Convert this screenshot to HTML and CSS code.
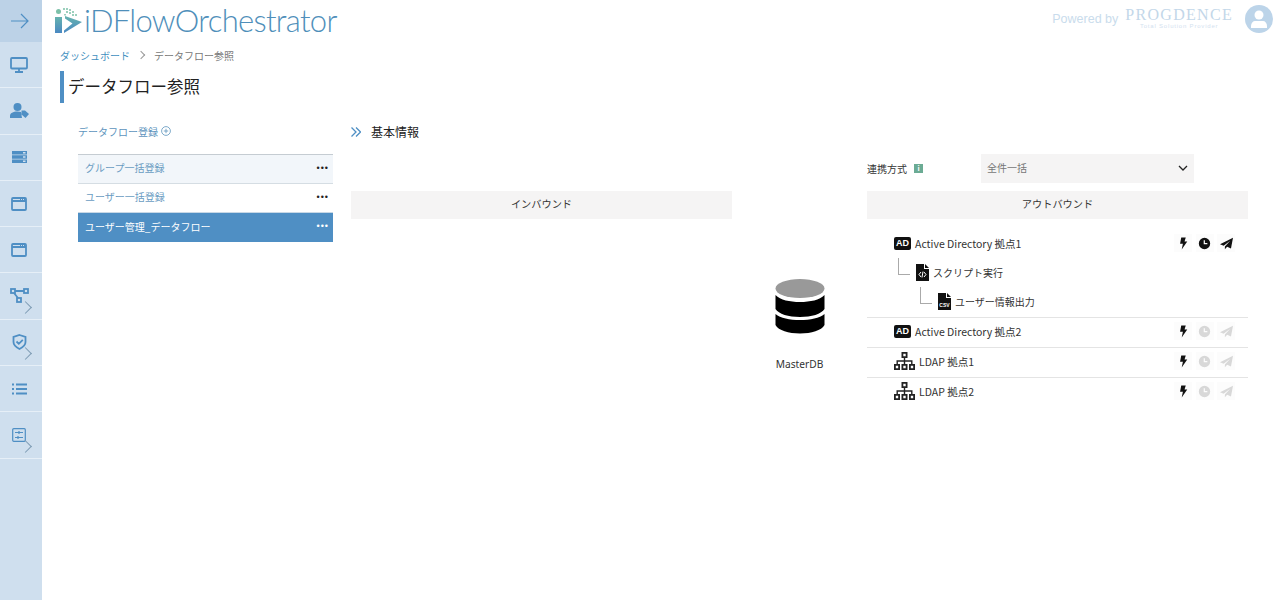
FILE: index.html
```html
<!DOCTYPE html>
<html lang="ja">
<head>
    <meta charset="UTF-8">
    <title>データフロー参照</title>
    <link rel="stylesheet" href="styles.css">
</head>
<body>
    <svg class="icon-defs" width="0" height="0">
        <symbol id="bolt" viewBox="0 0 12 16"><path d="M3 0h6L7.400 5.400H11L3.600 16l1.600-7.600H1.400z"/></symbol>
        <symbol id="clock" viewBox="0 0 16 16"><path fill-rule="evenodd" d="M8 1a7 7 0 1 1 0 14A7 7 0 0 1 8 1zM7 4v5h4.500V7.500H8.500V4z"/></symbol>
        <symbol id="send" viewBox="0 0 16 16"><path d="M16 1 13.500 14 8.800 12 6 15V11.800L12.500 4.500 4.500 10.800 0 9z"/></symbol>
        <symbol id="ldap" viewBox="0 0 21 18">
            <path d="M7.500 0h6v6h-6zM9.300 1.800v2.400h2.400V1.800zM0 12h6v6H0zM1.800 13.800v2.400h2.400v-2.400zM7.500 12h6v6h-6zM9.300 13.800v2.400h2.400v-2.400zM15 12h6v6h-6zM16.800 13.800v2.400h2.400v-2.400zM9.800 6h1.400v2.300h7.300V12h-1.400V9.700h-5.900V12H9.800V9.700H3.900V12H2.500V8.300h7.300z" fill-rule="evenodd"/>
        </symbol>
    </svg>

    <div class="layout">
        <nav class="sidebar">
            <div class="nav-item nav-toggle">
                <svg width="20" height="18" viewBox="0 0 20 18" class="line-icon"><path d="M1 9h17M11 2l7 7-7 7"/></svg>
            </div>
            <div class="nav-item">
                <svg width="18" height="16" viewBox="0 0 18 16" class="line-icon thick"><rect x="1" y="1" width="16" height="10.500" rx="1"/><path d="M9 12v2.500M5 15h8"/></svg>
            </div>
            <div class="nav-item">
                <svg width="19" height="15" viewBox="0 0 19 15" class="fill-icon"><circle cx="7.500" cy="4" r="4"/><path d="M0 15v-2c0-3 3-4.500 7.500-4.500 1.500 0 2.500.2 3.500.5l1 6zM11.500 7.500h3.500l4 3.500-3.500 4-4-3.500z"/></svg>
            </div>
            <div class="nav-item">
                <svg width="15" height="12" viewBox="0 0 15 12" class="fill-icon"><path fill-rule="evenodd" d="M0 0h15v3.500H0zM11 1v1.500h2.500V1zM0 4.250h15v3.500H0zM11 5.250v1.500h2.500v-1.500zM0 8.500h15V12H0zM11 9.500V11h2.500V9.500z"/></svg>
            </div>
            <div class="nav-item">
                <svg width="16" height="14" viewBox="0 0 16 14" class="line-icon thick"><rect x="1" y="1" width="14" height="12" rx="1"/><path d="M1 4h14M9 2.500h1M11 2.500h1M13 2.500h1"/></svg>
            </div>
            <div class="nav-item">
                <svg width="16" height="14" viewBox="0 0 16 14" class="line-icon thick"><rect x="1" y="1" width="14" height="12" rx="1"/><path d="M1 4h14M9 2.500h1M11 2.500h1M13 2.500h1"/></svg>
            </div>
            <div class="nav-item has-sub">
                <svg width="19" height="16" viewBox="0 0 19 16" class="line-icon thick"><rect x="1" y="1" width="4" height="4"/><rect x="14" y="1" width="4" height="4"/><rect x="7" y="10" width="4" height="4"/><path d="M5 3h9M4 5l4 5"/></svg>
                <span class="sub-arrow"></span>
            </div>
            <div class="nav-item has-sub">
                <svg width="15" height="16" viewBox="0 0 15 16" class="line-icon thick"><path d="M7.500 1l6 2v5c0 3-3 5.500-6 7-3-1.500-6-4-6-7V3zM4.500 7.500l2.300 2.300 4-4"/></svg>
                <span class="sub-arrow"></span>
            </div>
            <div class="nav-item">
                <svg width="15" height="12" viewBox="0 0 15 12" class="line-icon thick"><path d="M0 1.500h2M4 1.500h11M0 6h2M4 6h11M0 10.500h2M4 10.500h11"/></svg>
            </div>
            <div class="nav-item has-sub">
                <svg width="14" height="14" viewBox="0 0 14 14" class="line-icon"><rect x=".7" y=".7" width="12.600" height="12.600" rx="1"/><path d="M3 4.500h8M7 3v3M3 9.500h8M6 8v3"/></svg>
                <span class="sub-arrow"></span>
            </div>
        </nav>

        <div class="page">
            <header class="topbar">
                <div class="logo">
                    <svg class="logo-mark" width="28" height="26" viewBox="0 0 28 26">
                        <defs>
                            <linearGradient id="logo-grad" x1="0" y1="0" x2="0" y2="1">
                                <stop offset="0" stop-color="#66b3ae"/>
                                <stop offset="1" stop-color="#4a88c2"/>
                            </linearGradient>
                        </defs>
                        <rect x="0" y="9" width="7" height="16" fill="url(#logo-grad)"/>
                        <circle cx="3.500" cy="3.500" r="2.500" fill="#7cc0a8"/>
                        <path d="M10 8 27 14 9 25V22.500L17.500 15.500 10 10.500z" fill="url(#logo-grad)"/>
                        <path d="M8 0h2v2H8zM11 0h2v2h-2zM14 1h2v2h-2zM11 3h2v2h-2zM14 4h2v2h-2zM17 3h2v2h-2zM17 6h2v2h-2zM20 6h2v2h-2zM9 6h2v1.500H9z" fill="#9cd0bd"/>
                    </svg>
                    <span class="logo-text">iDFlowOrchestrator</span>
                </div>
                <div class="powered">
                    <span class="powered-by">Powered by</span>
                    <div class="vendor">
                        <span class="vendor-name">PROGDENCE</span>
                        <span class="vendor-sub">Total Solution Provider</span>
                    </div>
                    <div class="avatar">
                        <svg width="16" height="18" viewBox="0 0 16 18" fill="#fff"><circle cx="8" cy="5" r="4.500"/><path d="M0 18v-2c0-3 2-5 4-5h8c2 0 4 2 4 5v2z"/></svg>
                    </div>
                </div>
            </header>

            <div class="breadcrumb">
                <a class="crumb-link">ダッシュボード</a>
                <span class="crumb-sep"></span>
                <span>データフロー参照</span>
            </div>

            <h1 class="page-title">データフロー参照</h1>

            <div class="columns">
                <aside class="flow-panel">
                    <div class="flow-add">
                        データフロー登録
                        <svg width="10" height="10" viewBox="0 0 10 10" class="plus"><circle cx="5" cy="5" r="4.400"/><path d="M2.800 5h4.400M5 2.800v4.400"/></svg>
                    </div>
                    <ul class="flow-list">
                        <li class="flow-item hover"><span>グループ一括登録</span><span class="dots">•••</span></li>
                        <li class="flow-item"><span>ユーザー一括登録</span><span class="dots">•••</span></li>
                        <li class="flow-item active"><span>ユーザー管理_データフロー</span><span class="dots">•••</span></li>
                    </ul>
                </aside>

                <main class="detail">
                    <div class="section-head">
                        <svg width="10" height="10" viewBox="0 0 10 10" class="chevrons"><path d="M.5 .5 5 5 .5 9.500M5 .5 9.500 5 5 9.500"/></svg>
                        基本情報
                    </div>

                    <div class="mode-row">
                        <label class="mode-label">連携方式 <span class="info-badge">i</span></label>
                        <div class="mode-select">
                            全件一括
                            <svg width="10" height="6" viewBox="0 0 10 6" class="caret"><path d="M1 1l4 4 4-4"/></svg>
                        </div>
                    </div>

                    <div class="bound-grid">
                        <section>
                            <div class="bound-head">インバウンド</div>
                        </section>

                        <div class="master">
                            <svg width="50" height="55" viewBox="0 0 50 55">
                                <ellipse cx="25" cy="9.500" rx="24.500" ry="9.500" fill="#999"/>
                                <path d="M.5 16c5 5 14 7 24.500 7s19.500-2 24.500-7v14c-3 5-13 8-24.500 8S3.500 35 .5 30z"/>
                                <path d="M.5 35c5 4 14 6 24.500 6s19.500-2 24.500-6v11c-3 5.500-13 8.500-24.500 8.500S3.500 51.500 .5 46z"/>
                            </svg>
                            <div class="master-name">MasterDB</div>
                        </div>

                        <section>
                            <div class="bound-head">アウトバウンド</div>
                            <div class="target">
                                <div class="target-row">
                                    <span class="target-name"><span class="ad-badge">AD</span>Active Directory 拠点1</span>
                                    <span class="actions">
                                        <span class="action"><svg width="9" height="13"><use href="#bolt"/></svg></span>
                                        <span class="action"><svg width="13" height="13"><use href="#clock"/></svg></span>
                                        <span class="action"><svg width="13" height="13"><use href="#send"/></svg></span>
                                    </span>
                                </div>
                                <div class="sub-row level-1">
                                    <span class="tree-line"></span>
                                    <svg width="13" height="17" viewBox="0 0 13 17" class="file-icon"><path d="M0 0h8v5h5v12H0zM9 0l4 4H9z"/><path d="M5 8 3 10.500 5 13M8 8l2 2.500L8 13M7 7.500 6 13.500" class="file-mark"/></svg>
                                    スクリプト実行
                                </div>
                                <div class="sub-row level-2">
                                    <span class="tree-line"></span>
                                    <svg width="13" height="17" viewBox="0 0 13 17" class="file-icon"><path d="M0 0h8v5h5v12H0zM9 0l4 4H9z"/><text x="6.500" y="13.500" class="file-text">CSV</text></svg>
                                    ユーザー情報出力
                                </div>
                            </div>
                            <div class="target">
                                <div class="target-row">
                                    <span class="target-name"><span class="ad-badge">AD</span>Active Directory 拠点2</span>
                                    <span class="actions">
                                        <span class="action"><svg width="9" height="13"><use href="#bolt"/></svg></span>
                                        <span class="action off"><svg width="13" height="13"><use href="#clock"/></svg></span>
                                        <span class="action off"><svg width="13" height="13"><use href="#send"/></svg></span>
                                    </span>
                                </div>
                            </div>
                            <div class="target">
                                <div class="target-row">
                                    <span class="target-name"><svg class="ldap-icon" width="21" height="18"><use href="#ldap"/></svg>LDAP 拠点1</span>
                                    <span class="actions">
                                        <span class="action"><svg width="9" height="13"><use href="#bolt"/></svg></span>
                                        <span class="action off"><svg width="13" height="13"><use href="#clock"/></svg></span>
                                        <span class="action off"><svg width="13" height="13"><use href="#send"/></svg></span>
                                    </span>
                                </div>
                            </div>
                            <div class="target">
                                <div class="target-row">
                                    <span class="target-name"><svg class="ldap-icon" width="21" height="18"><use href="#ldap"/></svg>LDAP 拠点2</span>
                                    <span class="actions">
                                        <span class="action"><svg width="9" height="13"><use href="#bolt"/></svg></span>
                                        <span class="action off"><svg width="13" height="13"><use href="#clock"/></svg></span>
                                        <span class="action off"><svg width="13" height="13"><use href="#send"/></svg></span>
                                    </span>
                                </div>
                            </div>
                        </section>
                    </div>
                </main>
            </div>
        </div>
    </div>
</body>
</html>
```

FILE: styles.css
```css
:root {
    --side-bg: #cfdfee;
    --side-dark: #bcd2e7;
    --blue: #4f8fc4;
    --link: #3f8fc0;
    --text-main: #333;
    --head-bg: #f5f4f4;
}

* {
    box-sizing: border-box;
}

body {
    margin: 0;
    height: 600px;
    overflow: hidden;
    background: #fff;
    color: var(--text-main);
    font-family: "Noto Sans CJK JP", "Noto Sans", "Liberation Sans", sans-serif;
    font-size: 10px;
}

.icon-defs {
    position: absolute;
}

.layout {
    display: flex;
    height: 600px;
}

/* サイドバー */
.sidebar {
    width: 42px;
    flex-shrink: 0;
    background: var(--side-bg);
}

.nav-item {
    height: 46.300px;
    display: flex;
    align-items: center;
    justify-content: center;
    padding-right: 4px;
    border-bottom: 1px solid #e6eff7;
    position: relative;
}

.nav-toggle {
    height: 42px;
    padding-right: 3px;
    background: var(--side-dark);
    border-bottom: none;
}

.line-icon {
    fill: none;
    stroke: #4f8fc4;
    stroke-width: 1.200;
}

.line-icon.thick {
    stroke-width: 1.800;
}

.fill-icon {
    fill: #4f8fc4;
}

.sub-arrow {
    position: absolute;
    right: 12px;
    bottom: 7px;
    width: 9px;
    height: 9px;
    border-top: 1px solid #7d9bb3;
    border-right: 1px solid #7d9bb3;
    transform: rotate(45deg);
}

.page {
    flex: 1;
    min-width: 0;
}

/* ヘッダー */
.topbar {
    height: 41px;
    display: flex;
    justify-content: space-between;
    padding: 0 6px 0 13px;
}

.logo {
    display: flex;
    align-items: center;
    gap: 1px;
    height: 41px;
}

.logo-text {
    font-family: "Lato", "Liberation Sans", sans-serif;
    font-size: 31px;
    font-weight: 300;
    letter-spacing: -0.700px;
    line-height: 38px;
    margin-top: -2px;
    color: #4f8fba;
}

.powered {
    display: flex;
    align-items: center;
    height: 37px;
}

.powered-by {
    font-family: "Liberation Sans", sans-serif;
    font-size: 12.500px;
    color: #c9dcec;
    margin-right: 7px;
}

.vendor {
    display: flex;
    flex-direction: column;
    align-items: center;
    margin-right: 12px;
}

.vendor-name {
    font-family: "Liberation Serif", serif;
    font-size: 16px;
    line-height: 14px;
    letter-spacing: 1.300px;
    color: #c3d7e9;
}

.vendor-sub {
    font-family: "Liberation Sans", sans-serif;
    font-size: 6px;
    line-height: 8px;
    letter-spacing: 0.800px;
    color: #d3e2ef;
}

.avatar {
    width: 28px;
    height: 28px;
    border-radius: 50%;
    background: #bcd4e9;
    display: flex;
    align-items: center;
    justify-content: center;
}

.breadcrumb {
    display: flex;
    align-items: center;
    height: 28px;
    padding-left: 18px;
    color: #777;
}

.crumb-link {
    color: var(--link);
}

.crumb-sep {
    width: 6px;
    height: 6px;
    margin: 0 10px 0 8px;
    border-top: 1px solid #999;
    border-right: 1px solid #999;
    transform: rotate(45deg);
}

.page-title {
    margin: 2px 0 0 18px;
    height: 32px;
    border-left: 4px solid var(--blue);
    padding-left: 4px;
    font-size: 16.500px;
    font-weight: 400;
    line-height: 30px;
    color: #222;
}

.columns {
    display: flex;
    padding: 19px 31px 0 36px;
}

/* データフロー一覧 */
.flow-panel {
    width: 255px;
    margin-right: 18px;
    flex-shrink: 0;
}

.flow-add {
    display: flex;
    align-items: center;
    gap: 3px;
    height: 18px;
    color: #5d94bd;
}

.plus {
    fill: none;
    stroke: #5d94bd;
    stroke-width: 0.800;
}

.flow-list {
    list-style: none;
    margin: 14px 0 0;
    padding: 0;
}

.flow-item {
    height: 29px;
    display: flex;
    align-items: center;
    justify-content: space-between;
    padding: 0 4px 3px 7px;
    color: #6a9cc2;
    border-top: 1px solid #d5dde3;
}

.flow-item.hover {
    background: #f2f6fa;
    border-top-color: #c5ccd2;
}

.flow-item.active {
    background: var(--blue);
    color: #fff;
    border-top-color: #c8d8e6;
    height: 30px;
}

.dots {
    font-family: "Liberation Sans", sans-serif;
    font-size: 9px;
    letter-spacing: 1px;
    color: #222;
}

.active .dots {
    color: #fff;
}

/* 基本情報 */
.detail {
    flex: 1;
    min-width: 0;
    position: relative;
}

.section-head {
    display: flex;
    align-items: center;
    gap: 10px;
    height: 19px;
    font-size: 12px;
    color: #222;
}

.chevrons {
    fill: none;
    stroke: #4f8fc4;
    stroke-width: 1.300;
}

.mode-row {
    display: flex;
    align-items: center;
    margin: 13px 0 0 516px;
    height: 29px;
}

.mode-label {
    width: 114px;
    color: #333;
    display: flex;
    align-items: center;
    gap: 4px;
}

.info-badge {
    width: 9px;
    height: 9px;
    margin-left: 3px;
    background: #6bab94;
    color: #fff;
    font-size: 7px;
    font-weight: 700;
    line-height: 9px;
    text-align: center;
}

.mode-select {
    width: 213px;
    height: 29px;
    background: var(--head-bg);
    padding: 0 6px 2px 6px;
    display: flex;
    align-items: center;
    justify-content: space-between;
    color: #777;
}

.caret {
    fill: none;
    stroke: #222;
    stroke-width: 1.300;
}

.bound-grid {
    display: grid;
    grid-template-columns: 381px 135px 381px;
    margin-top: 8px;
}

.bound-head {
    height: 28px;
    background: var(--head-bg);
    text-align: center;
    line-height: 25px;
    font-size: 10.200px;
    color: #333;
}

.master {
    display: flex;
    flex-direction: column;
    align-items: center;
    padding-top: 88px;
}

.master-name {
    margin-top: 23px;
    font-family: "Noto Sans", sans-serif;
    font-size: 10.200px;
    color: #333;
}

.target {
    border-bottom: 1px solid #e4e4e4;
}

.bound-head + .target {
    padding-top: 10px;
}

.target:last-child {
    border-bottom: none;
}

.target-row {
    height: 29px;
    display: flex;
    align-items: center;
    justify-content: space-between;
    padding: 0 13px 1px 27px;
}

.target + .target .target-row {
    padding-bottom: 3px;
}

.target-name {
    display: flex;
    align-items: center;
    gap: 4px;
    font-size: 10.500px;
    color: #333;
}

.ad-badge {
    width: 17px;
    height: 13px;
    background: #111;
    color: #fff;
    border-radius: 2px;
    font-family: "Liberation Sans", sans-serif;
    font-size: 9px;
    font-weight: 700;
    line-height: 13px;
    text-align: center;
}

.ldap-icon {
    fill: #222;
}

.actions {
    display: flex;
    gap: 3.500px;
}

.action {
    width: 18px;
    height: 18px;
    display: flex;
    align-items: center;
    justify-content: center;
    background: #fcfcfc;
    fill: #111;
}

.action.off {
    fill: #d8d8d8;
}

.sub-row {
    height: 29px;
    display: flex;
    align-items: center;
    gap: 4px;
    padding-bottom: 1px;
    position: relative;
    color: #333;
}

.level-1 {
    padding-left: 49px;
}

.level-2 {
    height: 30px;
    padding-left: 71px;
    padding-bottom: 2px;
}

.tree-line {
    position: absolute;
    top: 0;
    width: 12px;
    height: 17px;
    border-left: 1px solid #aaa;
    border-bottom: 1px solid #aaa;
}

.level-1 .tree-line {
    left: 31px;
}

.level-2 .tree-line {
    left: 53px;
}

.file-icon {
    fill: #111;
}

.file-mark {
    fill: none;
    stroke: #fff;
    stroke-width: 1;
}

.file-text {
    fill: #fff;
    font-family: "Liberation Sans", sans-serif;
    font-size: 5px;
    font-weight: 700;
    text-anchor: middle;
}
```
